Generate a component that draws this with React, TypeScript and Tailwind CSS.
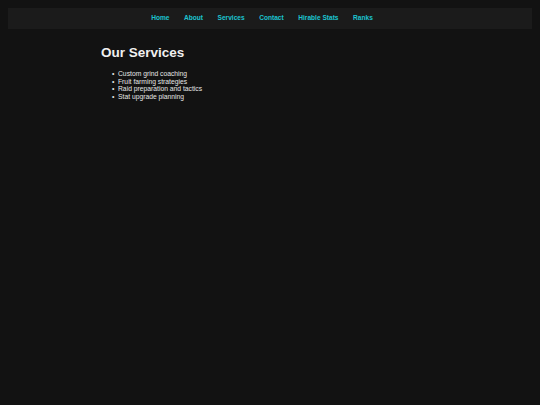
const NAV_LINKS = ['Home', 'About', 'Services', 'Contact', 'Hirable Stats', 'Ranks']

const SERVICES = [
  'Custom grind coaching',
  'Fruit farming strategies',
  'Raid preparation and tactics',
  'Stat upgrade planning',
]

export default function App() {
  return (
    <div className="min-h-[405px] bg-[#121212] p-[8px] font-['Liberation_Sans',Arial,sans-serif]">
      {/* Top Nav */}
      <nav className="h-[21px] bg-[#1b1b1b] flex items-center justify-center gap-[14.5px] pr-[16px]">
        {NAV_LINKS.map(link => (
          <a key={link} href="#" className="text-[6.6px] font-bold text-[#1cc4d0] leading-none">
            {link}
          </a>
        ))}
      </nav>

      {/* Content */}
      <main className="w-[338px] mx-auto pt-[16px]">
        <h2 className="text-[13.5px] font-bold text-[#f0f0f0] leading-[15.5px]">Our Services</h2>
        <ul className="mt-[9.5px] pl-[11px] text-[6.75px] leading-[7.6px] text-[#e6e6e6]">
          {SERVICES.map(item => (
            <li key={item} className="flex">
              <span className="w-[6px] shrink-0">•</span>
              <span>{item}</span>
            </li>
          ))}
        </ul>
      </main>
    </div>
  )
}
